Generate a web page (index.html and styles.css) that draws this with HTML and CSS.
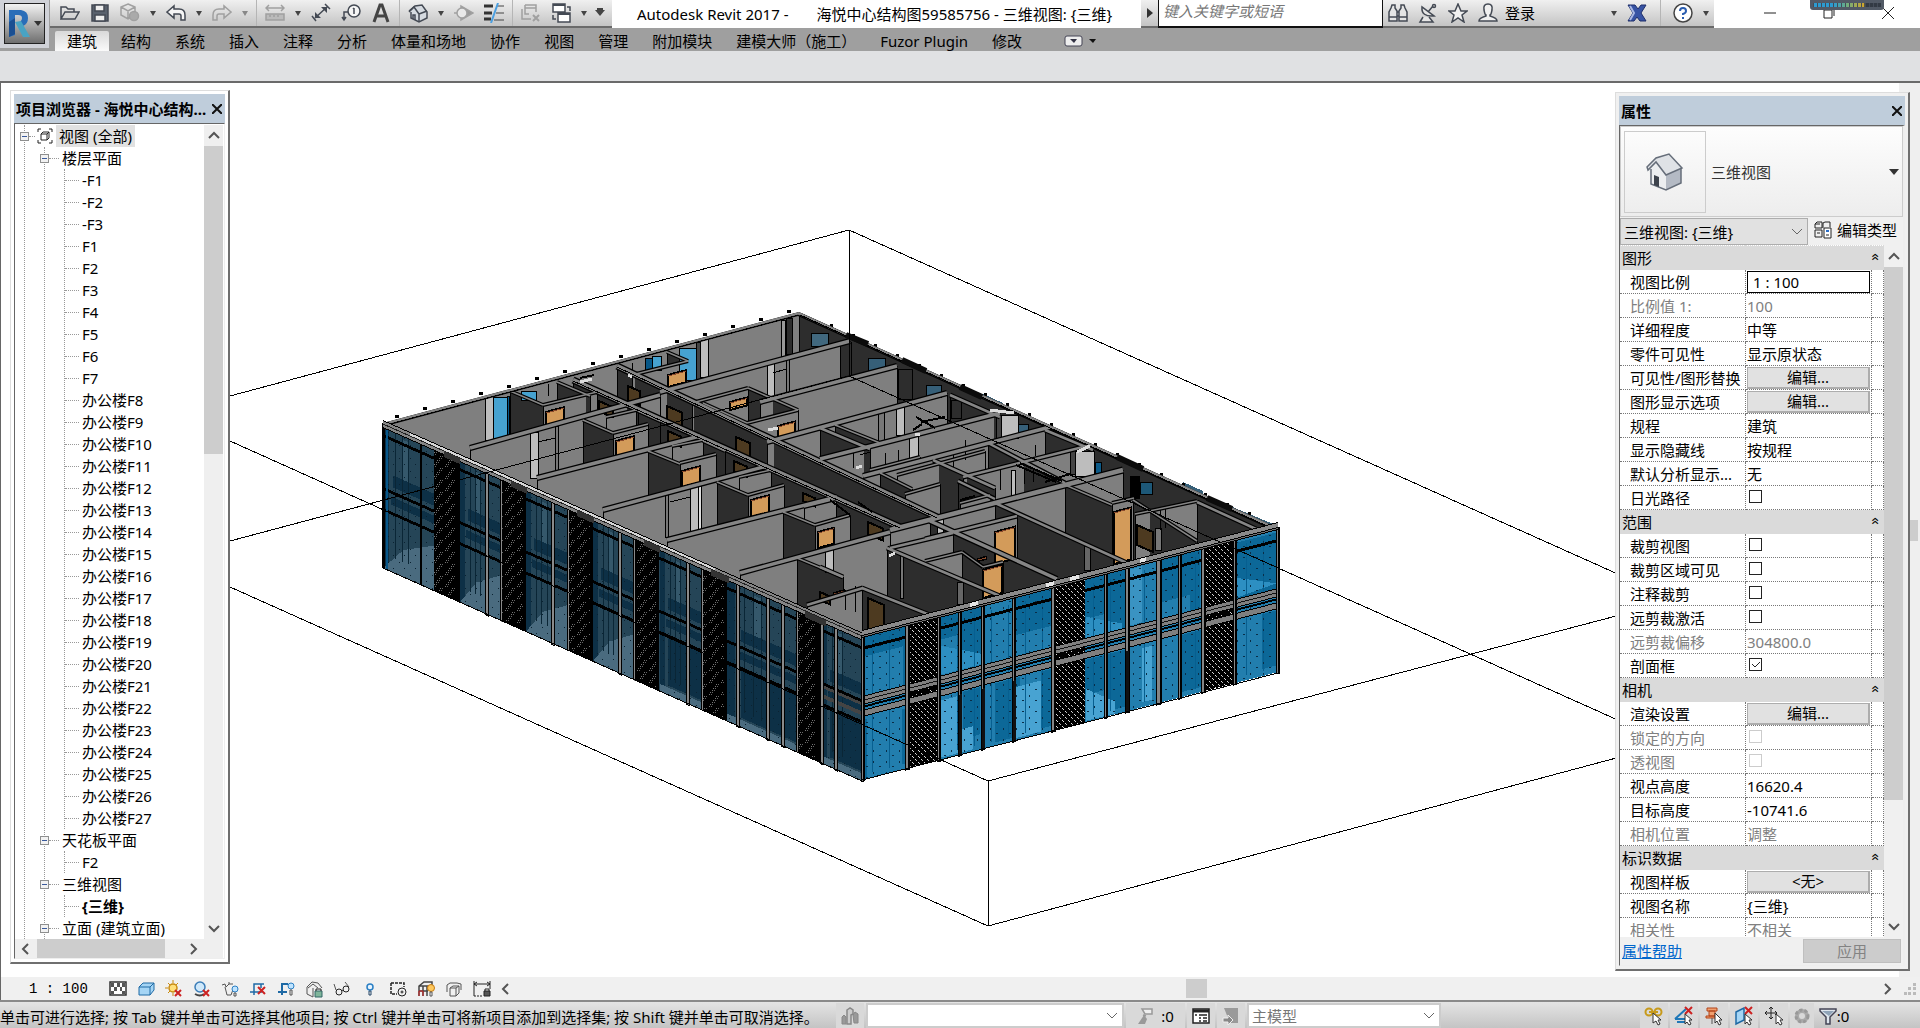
FILE: index.html
```html
<!DOCTYPE html>
<html lang="zh-CN">
<head>
<meta charset="utf-8">
<title>Autodesk Revit 2017 - 海悦中心结构图59585756</title>
<link rel="stylesheet" href="styles.css">
</head>
<body>
<header class="top">
  <button class="app" aria-label="应用程序菜单">
    <svg width="24" height="30" viewBox="0 0 24 30"><path d="M2 1h12q7 1 7 8 0 6-5 8l-6-3q5-1 5-5 0-3-4-3H8v20l-6 2z" fill="#2a6db8"/><path d="M8 9l-6 4v15l6-3z" fill="#1b4f92"/><path d="M8 13l6-1 9 16h-7z" fill="#49a3c4"/></svg>
    <svg width="8" height="5" viewBox="0 0 8 5"><path d="M0 0h8L4 5z" fill="#333"/></svg>
  </button>
  <div class="bars">
    <div class="titlebar">
      <div class="qat">
        <button class="tb" aria-label="打开"><svg width="20" height="20" viewBox="0 0 20 20" class="ic"><path d="M1 16V4h5l2 2h6v3M1 16l4-7h14l-4 7z"/></svg></button>
        <button class="tb" aria-label="保存"><svg width="20" height="20" viewBox="0 0 20 20" class="ic"><path d="M2 2h16v16H2z" fill="#59616d"/><path d="M5 2h9v6H5z" fill="#eee"/><path d="M5 12h10v6H5z" fill="#eee"/></svg></button>
        <button class="tb" aria-label="同步"><svg width="20" height="20" viewBox="0 0 20 20" class="ic dim"><path d="M8 1l7 3v8l-7 4-7-4V4zM1 4l7 4 7-4M8 8v8"/><circle cx="14" cy="13" r="4.500" fill="#aaa"/></svg></button>
        <button class="drop" aria-label="同步选项"></button>
        <button class="tb" aria-label="放弃"><svg width="20" height="20" viewBox="0 0 20 20" class="ic"><path d="M1 9l7-6v3h5q6 0 6 6v5h-4v-4q0-2-2-2H8v4z" fill="#f5f5f5"/></svg></button>
        <button class="drop" aria-label="放弃选项"></button>
        <button class="tb" aria-label="重做"><svg width="20" height="20" viewBox="0 0 20 20" class="ic dim"><path d="M19 9l-7-6v3H7q-6 0-6 6v5h4v-4q0-2 2-2h5v4z"/></svg></button>
        <button class="drop dimmed" aria-label="重做选项"></button>
        <span class="sep"></span>
        <button class="tb" aria-label="测量"><svg width="20" height="20" viewBox="0 0 20 20" class="ic dim"><path d="M1 5h18M4 2L1 5l3 3M16 2l3 3-3 3"/><path d="M1 11h18v6H1z" fill="#bbb"/><path d="M5 12v2M9 12v2M13 12v2"/></svg></button>
        <button class="drop" aria-label="测量选项"></button>
        <button class="tb" aria-label="对齐尺寸标注"><svg width="20" height="20" viewBox="0 0 20 20" class="ic"><path d="M4 15L16 4M1 13l4 5M14 1l5 5"/><path d="M4 15v-6l6 6zM16 4v6l-6-6z" fill="#444a54" stroke="none"/></svg></button>
        <button class="tb" aria-label="按类别标记"><svg width="20" height="20" viewBox="0 0 20 20" class="ic"><circle cx="13" cy="8" r="6" fill="#f5f5f5"/><path d="M13 5v6M12 6l1-1M7 9H3v7M1 14l2 3 2-3"/></svg></button>
        <button class="tb" aria-label="文字"><svg width="20" height="20" viewBox="0 0 20 20"><path d="M3 19L9 2h2l6 17M6 13h8" stroke="#444" stroke-width="3" fill="none"/></svg></button>
        <span class="sep"></span>
        <button class="tb" aria-label="默认三维视图"><svg width="20" height="20" viewBox="0 0 20 20" class="ic"><path d="M1 8l6-5 7-1 5 7v6l-8 4-8-4V9" fill="#d5dae0"/><path d="M1 9l5-5 5 7v8M11 11l8-3M5 16v-4h2v5"/></svg></button>
        <button class="drop" aria-label="三维视图选项"></button>
        <button class="tb" aria-label="剖面"><svg width="20" height="20" viewBox="0 0 20 20" class="ic dim"><path d="M7 3v14l12-7z" fill="#999"/><circle cx="8" cy="10" r="5" fill="#e8e8e8"/><path d="M0 10h3"/></svg></button>
        <button class="tb" aria-label="细线"><svg width="20" height="20" viewBox="0 0 20 20"><path d="M0 3h9M0 10h8M0 16h7" stroke="#333" stroke-width="3"/><path d="M13 3h7M12 10h8M10 17h10" stroke="#444"/><path d="M14 0L7 20" stroke="#4b9fe0" stroke-width="2"/></svg></button>
        <span class="sep"></span>
        <button class="tb" aria-label="关闭隐藏窗口"><svg width="20" height="20" viewBox="0 0 20 20" class="ic dim"><path d="M4 2h11v7M4 2v9h4M1 6v10h9M4 5h11"/><path d="M12 12l6 6M18 12l-6 6" stroke-width="2"/></svg></button>
        <button class="tb" aria-label="切换窗口"><svg width="20" height="20" viewBox="0 0 20 20" class="ic"><path d="M2 1h12v8H2zM7 10h12v9H7z" fill="#fff"/><path d="M2 2h12M7 11h12" stroke-width="2"/><path d="M2 12v4h3M16 4h3v4"/></svg></button>
        <button class="drop" aria-label="窗口选项"></button>
        <button class="drop more" aria-label="自定义快速访问工具栏"></button>
      </div>
      <h1 class="title"><span>Autodesk Revit 2017 -</span><span>海悦中心结构图59585756 - 三维视图: {三维}</span></h1>
      <button class="expand" aria-label="展开搜索"><svg width="6" height="10" viewBox="0 0 6 10"><path d="M0 0l6 5-6 5z" fill="#333"/></svg></button>
      <input class="search" type="text" placeholder="键入关键字或短语" aria-label="搜索">
      <div class="info">
        <button class="tb" aria-label="搜索"><svg width="20" height="20" viewBox="0 0 20 20" class="ic"><path d="M4 2h3v3l2 3v10H1V9l2-4zM13 2h3l1 3 2 4v9h-8V8l2-3zM9 9h2v4H9zM1 14h8M11 14h8" fill="#e5e5e5"/></svg></button>
        <button class="tb" aria-label="通讯中心"><svg width="20" height="20" viewBox="0 0 20 20" class="ic"><path d="M4 4q-1 10 12 9zM5 14l-3 5h13l-4-5M10 9l5-6" fill="#e5e5e5"/><circle cx="16" cy="3" r="1.500"/></svg></button>
        <button class="tb" aria-label="收藏夹"><svg width="20" height="20" viewBox="0 0 20 20" class="ic"><path d="M10 1l3 7h6l-5 4 2 7-6-4-6 4 2-7-5-4h6z" fill="#f0f0f0"/></svg></button>
        <button class="login"><svg width="20" height="20" viewBox="0 0 20 20" class="ic"><path d="M10 1q5 0 4 6-1 5-2 5v1q7 2 7 5H1q0-3 7-5v-1q-1 0-2-5-1-6 4-6z" fill="#f0f0f0"/></svg>登录</button>
        <button class="drop login-drop" aria-label="登录选项"></button>
        <button class="tb" aria-label="Exchange 应用"><svg width="20" height="20" viewBox="0 0 20 20"><path d="M1 2h7l3 4 3-4h5l-5 8 5 8h-6l-3-4-3 4H1l5-8z" fill="#3753a4" stroke="#1f2f6b"/><path d="M3 3l4 7-4 7" stroke="#a9b8e4" stroke-width="2" fill="none"/></svg></button>
        <span class="sep"></span>
        <button class="tb" aria-label="帮助"><svg width="20" height="20" viewBox="0 0 20 20"><circle cx="10" cy="10" r="9" fill="#fff" stroke="#444" stroke-width="1.500"/><path d="M7 8q0-3 3-3t3 3q0 2-3 3v1M10 14v2" stroke="#2a5db0" stroke-width="2" fill="none"/></svg></button>
        <button class="drop" aria-label="帮助选项"></button>
      </div>
      <div class="win">
        <button aria-label="最小化"><svg width="12" height="12" viewBox="0 0 12 12" class="ln"><path d="M0 6h12"/></svg></button>
        <button aria-label="还原"><svg width="12" height="12" viewBox="0 0 12 12" class="ln"><path d="M1 3h8v8H1zM3 1h8v8"/></svg></button>
        <button aria-label="关闭"><svg width="12" height="12" viewBox="0 0 12 12" class="ln"><path d="M0 0l12 12M12 0L0 12"/></svg></button>
        <span class="meter"></span>
      </div>
    </div>
    <nav class="tabs">
      <button class="on">建筑</button><button>结构</button><button>系统</button><button>插入</button><button>注释</button><button>分析</button><button>体量和场地</button><button>协作</button><button>视图</button><button>管理</button><button>附加模块</button><button>建模大师（施工）</button><button>Fuzor Plugin</button><button>修改</button>
      <button class="mini" aria-label="最小化功能区"><svg width="32" height="12" viewBox="0 0 32 12"><rect x="1" y="1" width="17" height="10" rx="2" fill="#eee" stroke="#445"/><path d="M6 4h7l-3 4z" fill="#334"/><path d="M25 4h7l-3 4z" fill="#111"/></svg></button>
    </nav>
  </div>
</header>
<div class="ribbon"></div>

<main class="work">
  <svg class="model" id="model" viewBox="0 83 1920 894" preserveAspectRatio="xMidYMin meet" role="img" aria-label="三维视图模型"></svg>

  <section class="palette browser">
    <div class="cap"><h2>项目浏览器 - 海悦中心结构...</h2><button aria-label="关闭"><svg width="10" height="10" viewBox="0 0 10 10" class="x"><path d="M0 0l10 10M10 0L0 10"/></svg></button></div>
    <div class="frame">
      <div class="scroller">
        <ul class="tree">
          <li><div class="row"><i class="tog"></i><i class="dash"></i><svg width="16" height="16" viewBox="0 0 16 16" class="ln"><path d="M1 4V1h3M12 1h3v3M15 12v3h-3M4 15H1v-3M4 6l2-2h6v6l-2 2H4zM4 6h6v6M10 6l2-2"/></svg><span class="sel">视图 (全部)</span></div>
            <ul class="l1">
              <li><div class="row"><i class="tog"></i><i class="dash"></i>楼层平面</div>
                <ul class="l2"><li>-F1</li><li>-F2</li><li>-F3</li><li>F1</li><li>F2</li><li>F3</li><li>F4</li><li>F5</li><li>F6</li><li>F7</li><li>办公楼F8</li><li>办公楼F9</li><li>办公楼F10</li><li>办公楼F11</li><li>办公楼F12</li><li>办公楼F13</li><li>办公楼F14</li><li>办公楼F15</li><li>办公楼F16</li><li>办公楼F17</li><li>办公楼F18</li><li>办公楼F19</li><li>办公楼F20</li><li>办公楼F21</li><li>办公楼F22</li><li>办公楼F23</li><li>办公楼F24</li><li>办公楼F25</li><li>办公楼F26</li><li>办公楼F27</li></ul></li>
              <li><div class="row"><i class="tog"></i><i class="dash"></i>天花板平面</div><ul class="l2"><li>F2</li></ul></li>
              <li><div class="row"><i class="tog"></i><i class="dash"></i>三维视图</div><ul class="l2"><li><b>{三维}</b></li></ul></li>
              <li><div class="row"><i class="tog"></i><i class="dash"></i>立面 (建筑立面)</div></li>
            </ul></li>
        </ul>
        <div class="vs"><svg width="12" height="8" viewBox="0 0 12 8" class="ch"><path d="M1 7l5-5 5 5"/></svg><div class="thumb tree-thumb"></div><svg width="12" height="8" viewBox="0 0 12 8" class="ch end"><path d="M1 1l5 5 5-5"/></svg></div>
      </div>
      <div class="hs"><svg width="8" height="12" viewBox="0 0 8 12" class="ch"><path d="M7 1L2 6l5 5"/></svg><div class="thumb"></div><svg width="8" height="12" viewBox="0 0 8 12" class="ch"><path d="M1 1l5 5-5 5"/></svg></div>
    </div>
  </section>

  <section class="palette props">
    <div class="cap"><h2>属性</h2><button aria-label="关闭"><svg width="10" height="10" viewBox="0 0 10 10" class="x"><path d="M0 0l10 10M10 0L0 10"/></svg></button></div>
    <div class="frame">
      <button class="type">
        <span class="pic"><svg width="40" height="40" viewBox="0 0 40 40"><path d="M4 16L8 33l13 5 15-7V16L23 3z" fill="#c9cdd3"/><path d="M4 16l7-6 10 11v17L6 32z" fill="#eceef0"/><path d="M21 21l15-7v17l-15 7z" fill="#b4bac4"/><path d="M2 15l9-9 13-4 13 14-16 7L11 10l-8 8z" fill="#dfe2e6" stroke="#666e7a" stroke-width="1.500"/><path d="M6 17v15l15 6 15-7V16" fill="none" stroke="#666e7a" stroke-width="1.500"/><path d="M9 33V23l5 2v10z" fill="#3d434c"/></svg></span>
        <span class="tn">三维视图</span>
        <svg width="10" height="6" viewBox="0 0 10 6"><path d="M0 0h10L5 6z" fill="#333"/></svg>
      </button>
      <div class="inst">
        <select aria-label="实例"><option>三维视图: {三维}</option></select>
        <button class="edit"><svg width="18" height="18" viewBox="0 0 18 18" class="ln"><path d="M1 3l2-2h5v6H1zM1 9h7v7H1zM9 2l2-1h5v5M9 2v5M1 3h5M3 12h3"/><path d="M10 7h7v10h-7z" fill="#fff"/><path d="M12 10h3" stroke="#2a6fc9" stroke-width="2"/><path d="M12 14h3"/></svg>编辑类型</button>
      </div>
      <div class="gridbox">
        <div class="clip">
        <table>
          <colgroup><col><col class="c2"><col class="c3"></colgroup>
          <tr class="g"><th colspan="3"><span>图形</span></th></tr>
          <tr><td><label for="sc">视图比例</label></td><td><input id="sc" class="val" type="text" value="1 : 100"></td><td></td></tr>
          <tr class="off"><td>比例值 1:</td><td>100</td><td></td></tr>
          <tr><td>详细程度</td><td>中等</td><td></td></tr>
          <tr><td>零件可见性</td><td>显示原状态</td><td></td></tr>
          <tr><td>可见性/图形替换</td><td><button>编辑...</button></td><td></td></tr>
          <tr><td>图形显示选项</td><td><button>编辑...</button></td><td></td></tr>
          <tr><td>规程</td><td>建筑</td><td></td></tr>
          <tr><td>显示隐藏线</td><td>按规程</td><td></td></tr>
          <tr><td>默认分析显示...</td><td>无</td><td></td></tr>
          <tr><td><label for="k1">日光路径</label></td><td><input id="k1" type="checkbox"></td><td></td></tr>
          <tr class="g"><th colspan="3"><span>范围</span></th></tr>
          <tr><td><label for="k2">裁剪视图</label></td><td><input id="k2" type="checkbox"></td><td></td></tr>
          <tr><td><label for="k3">裁剪区域可见</label></td><td><input id="k3" type="checkbox"></td><td></td></tr>
          <tr><td><label for="k4">注释裁剪</label></td><td><input id="k4" type="checkbox"></td><td></td></tr>
          <tr><td><label for="k5">远剪裁激活</label></td><td><input id="k5" type="checkbox"></td><td></td></tr>
          <tr class="off"><td>远剪裁偏移</td><td>304800.0</td><td></td></tr>
          <tr><td><label for="k6">剖面框</label></td><td><input id="k6" type="checkbox" checked></td><td></td></tr>
          <tr class="g"><th colspan="3"><span>相机</span></th></tr>
          <tr><td>渲染设置</td><td><button>编辑...</button></td><td></td></tr>
          <tr class="off"><td><label for="k7">锁定的方向</label></td><td><input id="k7" type="checkbox" disabled></td><td></td></tr>
          <tr class="off"><td><label for="k8">透视图</label></td><td><input id="k8" type="checkbox" disabled></td><td></td></tr>
          <tr><td>视点高度</td><td>16620.4</td><td></td></tr>
          <tr><td>目标高度</td><td>-10741.6</td><td></td></tr>
          <tr class="off"><td>相机位置</td><td>调整</td><td></td></tr>
          <tr class="g"><th colspan="3"><span>标识数据</span></th></tr>
          <tr><td>视图样板</td><td><button>&lt;无&gt;</button></td><td></td></tr>
          <tr><td>视图名称</td><td>{三维}</td><td></td></tr>
          <tr class="off"><td>相关性</td><td>不相关</td><td></td></tr>
        </table>
        </div>
        <div class="vs"><svg width="12" height="8" viewBox="0 0 12 8" class="ch"><path d="M1 7l5-5 5 5"/></svg><div class="thumb prop-thumb"></div><svg width="12" height="8" viewBox="0 0 12 8" class="ch end"><path d="M1 1l5 5 5-5"/></svg></div>
      </div>
      <div class="foot"><a href="#help">属性帮助</a><button disabled>应用</button></div>
    </div>
  </section>
  <div class="docscroll"><div class="thumb"></div></div>
</main>

<div class="viewbar">
  <button class="scale">1 : 100</button>
  <div class="vicons">
    <button aria-label="详细程度"><svg width="18" height="18" viewBox="0 0 18 18"><path d="M1 2h16v13H1z" fill="#fff" stroke="#333" stroke-width="1.500"/><path d="M2 3h3v4H2zM8 3h3v4H8zM13 3h3v4h-3zM5 7h3v4H5zM11 7h2v4h-2zM2 11h3v3H2zM13 11h3v3h-3z" fill="#555"/></svg></button>
    <button aria-label="视觉样式"><svg width="18" height="18" viewBox="0 0 18 18"><path d="M2 7l4-4h11v7l-4 5H2z" fill="#a5d5f5" stroke="#1f6aa5"/><path d="M2 7h11v8M13 7l4-4" fill="none" stroke="#1f6aa5"/></svg></button>
    <button aria-label="日光路径"><svg width="18" height="18" viewBox="0 0 18 18"><circle cx="8" cy="8" r="4" fill="#ffe07a" stroke="#c88a10" stroke-width="1.500"/><path d="M8 0v3M8 13v3M0 8h3M3 3l2 2M13 3l-2 2M3 13l2-2" stroke="#c88a10"/><path d="M10 10l6 6M16 10l-6 6" stroke="#c22" stroke-width="2"/></svg></button>
    <button aria-label="阴影"><svg width="18" height="18" viewBox="0 0 18 18"><circle cx="7" cy="7" r="5" fill="#cfe8fa" stroke="#3b7db8" stroke-width="1.500"/><path d="M2 14q5 3 9 0" stroke="#444" fill="none" stroke-width="2"/><path d="M10 10l6 6M16 10l-6 6" stroke="#c22" stroke-width="2"/></svg></button>
    <button aria-label="渲染对话框"><svg width="18" height="18" viewBox="0 0 18 18" class="ln"><path d="M1 5l3-1 1 3 3-3h4M4 7l2 8h4l3-8M8 4V2" stroke="#555"/><circle cx="14" cy="9" r="3" fill="#bfe4ff" stroke="#2a7fc4"/><path d="M13 13h2v3h-2z" stroke="#555"/></svg></button>
    <button aria-label="裁剪视图"><svg width="18" height="18" viewBox="0 0 18 18"><path d="M5 15V4h10M1 12h12M12 4v4" stroke="#1f6aa5" fill="none" stroke-width="1.500"/><path d="M9 7l7 7M16 7l-7 7" stroke="#c22" stroke-width="2"/></svg></button>
    <button aria-label="显示裁剪区域"><svg width="18" height="18" viewBox="0 0 18 18"><path d="M5 15V4h6M1 12h9" stroke="#1f6aa5" fill="none" stroke-width="2"/><circle cx="14" cy="6" r="3" fill="#bfe4ff" stroke="#2a7fc4"/><path d="M13 10h2v5h-2z" fill="none" stroke="#555"/></svg></button>
    <button aria-label="锁定三维视图"><svg width="18" height="18" viewBox="0 0 18 18" class="ln"><path d="M2 7l5-5 6 1 4 5M2 7v7l6 3M8 8v9M3 8l5-4 5 4" stroke="#555"/><path d="M10 11h7v6h-7z" fill="#7fb59a" stroke="#366"/><path d="M11 11V9h5v2"/></svg></button>
    <button aria-label="临时隐藏"><svg width="18" height="18" viewBox="0 0 18 18" class="ln"><circle cx="6" cy="12" r="3"/><circle cx="13" cy="9" r="3"/><path d="M9 11l1-1M3 10L1 4M16 7l-4-5" stroke="#555"/></svg></button>
    <button aria-label="显示隐藏的图元"><svg width="18" height="18" viewBox="0 0 18 18"><circle cx="9" cy="7" r="3" fill="#e6f4ff" stroke="#2a7fc4" stroke-width="1.500"/><path d="M8 11h2v4H8z" fill="none" stroke="#246"/></svg></button>
    <button aria-label="临时视图属性"><svg width="18" height="18" viewBox="0 0 18 18" class="ln"><path d="M2 3h13v4M2 3v11h6" stroke-width="1.500" stroke-dasharray="3 1"/><circle cx="13" cy="12" r="4"/><circle cx="13" cy="12" r="1"/></svg></button>
    <button aria-label="分析模型"><svg width="18" height="18" viewBox="0 0 18 18"><path d="M2 16V6l5-4h8v4M6 16V6M10 16V6M2 6h10M2 11h9" stroke="#444" stroke-width="1.500" fill="none"/><path d="M2 16v-5h4v5" stroke="#c22" fill="none"/><circle cx="14" cy="8" r="3.500" fill="#ffc95e" stroke="#c57a10"/><path d="M13 12h2v4h-2z" fill="#fff" stroke="#555"/></svg></button>
    <button aria-label="位移集"><svg width="18" height="18" viewBox="0 0 18 18" class="ln"><path d="M5 8l3-2h6v7l-3 3H5zM5 8h6v8M11 8l3-2M2 12V5l3-2h7l4 1v6" stroke="#555"/></svg></button>
    <button aria-label="显示约束"><svg width="18" height="18" viewBox="0 0 18 18" class="ln"><path d="M1 1v15M17 1v8M1 4h16M4 2L1 4l3 2M14 2l3 2-3 2"/><path d="M1 16h8" stroke-dasharray="2 1"/><path d="M11 11h6v5h-6z" fill="#555"/><path d="M12 11V9h4v2"/></svg></button>
    <button aria-label="折叠"><svg width="8" height="12" viewBox="0 0 8 12" class="ch"><path d="M7 1L2 6l5 5"/></svg></button>
  </div>
  <div class="hscroll"><div class="thumb"></div><svg width="8" height="12" viewBox="0 0 8 12" class="ch"><path d="M1 1l5 5-5 5"/></svg></div>
  <svg width="12" height="12" viewBox="0 0 12 12" class="grip"><path d="M9 0h3v3H9zM4 4h3v3H4zM9 4h3v3H9zM0 9h3v3H0zM4 9h3v3H4zM9 9h3v3H9z" fill="#bbb"/></svg>
</div>

<footer class="status">
  <p class="hint">单击可进行选择; 按 Tab 键并单击可选择其他项目; 按 Ctrl 键并单击可将新项目添加到选择集; 按 Shift 键并单击可取消选择。</p>
  <div class="sets">
    <button aria-label="工作集"><svg width="18" height="18" viewBox="0 0 18 18"><path d="M1 10l2-2 2 2v7H1zM12 8l2-3 3 2v9h-4z" fill="#999" stroke="#888"/><path d="M6 3l3-2 3 2v4l-2 1v9H6V8z" fill="#ccc" stroke="#888" stroke-width="1.500"/></svg></button>
    <select class="ws" aria-label="活动工作集"><option></option></select>
    <button class="count"><svg width="18" height="18" viewBox="0 0 18 18"><path d="M5 2h10v5H8zM6 8l3 1" fill="#eee" stroke="#999" stroke-width="1.500"/><path d="M7 8l-6 9h7l2-5z" fill="#999"/></svg>:0</button>
    <button aria-label="设计选项"><svg width="18" height="18" viewBox="0 0 18 18" class="ln"><path d="M1 2h16v14H1z" fill="#fff" stroke-width="1.500"/><path d="M1 4h16" stroke-width="3"/><path d="M3 8h2M7 8h8M7 11h2M11 11h4M7 14h2M11 14h4" stroke-width="1.500"/></svg></button>
    <button aria-label="编辑选项"><svg width="18" height="18" viewBox="0 0 18 18"><path d="M2 1h14v15H8" fill="#9a9a9a"/><path d="M1 11h5V8l5 5-5 5v-3H1z" fill="#888" stroke="#eee"/></svg></button>
    <select class="opt" aria-label="设计选项"><option>主模型</option></select>
  </div>
  <div class="picks">
    <button aria-label="选择链接"><svg width="20" height="20" viewBox="0 0 20 20"><circle cx="5" cy="6" r="3.500" fill="none" stroke="#c79a1b" stroke-width="2"/><circle cx="14" cy="6" r="3.500" fill="none" stroke="#c79a1b" stroke-width="2"/><path d="M5 6h9" stroke="#c79a1b" stroke-width="2"/><path d="M9 7v10l3-2 2 4 2-1-2-4h3z" fill="#fff" stroke="#333"/></svg></button>
    <button aria-label="选择基线图元"><svg width="20" height="20" viewBox="0 0 20 20"><path d="M1 13L12 3M1 13h12M3 16h9" stroke="#1f78b8" stroke-width="2" fill="none"/><path d="M11 1l7 7M18 1l-7 7" stroke="#c22" stroke-width="2"/><path d="M11 8v10l2-2 2 3 2-1-2-4h3z" fill="#fff" stroke="#333"/></svg></button>
    <button aria-label="选择锁定图元"><svg width="20" height="20" viewBox="0 0 20 20"><path d="M3 2h10v3H3zM5 5h6v5H5zM2 10h12v2H2z" fill="#f0a070" stroke="#b3451b"/><path d="M8 12v6" stroke="#555"/><path d="M11 7v10l2-2 2 4 2-1-2-4h3z" fill="#fff" stroke="#333"/></svg></button>
    <button aria-label="按面选择图元"><svg width="20" height="20" viewBox="0 0 20 20"><path d="M2 6l8-4v12l-8 4z" fill="#a5d5f5" stroke="#1f6aa5" stroke-width="1.500"/><path d="M11 1l7 7M18 1l-7 7" stroke="#c22" stroke-width="2"/><path d="M11 8v10l2-2 2 3 2-1-2-4h3z" fill="#fff" stroke="#333"/></svg></button>
    <button aria-label="选择时拖曳图元"><svg width="20" height="20" viewBox="0 0 20 20"><path d="M7 1v12M1 7h12M5 3l2-2 2 2M5 11l2 2 2-2M3 5L1 7l2 2M11 5l2 2-2 2" stroke="#222" fill="none"/><path d="M12 8v10l2-2 2 3 2-1-2-4h3z" fill="#fff" stroke="#333"/></svg></button>
    <button class="proc" aria-label="后台进程"><svg width="20" height="20" viewBox="0 0 20 20"><circle cx="10" cy="10" r="5" fill="none" stroke="#aaa" stroke-width="4"/><circle cx="10" cy="10" r="6" fill="none" stroke="#999" stroke-width="3" stroke-dasharray="3 2"/></svg></button>
    <button class="filter"><svg width="18" height="18" viewBox="0 0 18 18"><path d="M1 2h16v2l-6 6v7H7v-7L1 4z" fill="#dfe6ee" stroke="#445" stroke-width="1.500"/><path d="M3 4h12l-5 5z" fill="#8fa3b8"/></svg>:0</button>
  </div>
</footer>
<script src="building.js"></script>
</body>
</html>
```
FILE: styles.css
```css
* { box-sizing: border-box; }
body { margin: 0; min-height: 100vh; display: flex; flex-direction: column; background: #fff; color: #000; font: 15px/22px "Noto Sans", "Noto Sans CJK SC", sans-serif; }
button, input, select { font: inherit; color: inherit; margin: 0; padding: 0; border: 0; border-radius: 0; background: none; }
button { display: flex; align-items: center; justify-content: center; }
h1, h2, p, ul { margin: 0; padding: 0; font-size: 15px; font-weight: 400; }
ul { list-style: none; }
svg { flex: none; }
.ic { fill: none; stroke: #444a54; stroke-width: 1.5; }
.ic.dim { stroke: #a0a0a0; }
.ln { fill: none; stroke: #222; }
.x { stroke: #111; stroke-width: 2; }
.ch { fill: none; stroke: #555; stroke-width: 2; }

.top { display: flex; background: #9f9f9f; height: 51px; }
.app { width: 41px; margin: 3px 5px 7px 4px; gap: 3px; background: linear-gradient(#f2f2f2, #6f6f6f); border: 1px solid #222; outline: 4px solid #d0d2d8; }
.bars { flex: 1; min-width: 0; display: flex; flex-direction: column; }
.titlebar { display: flex; height: 28px; background: #fff; }
.qat, .info, .expand { display: flex; align-items: center; background: linear-gradient(#f0f0f0, #c4c4c4); border-bottom: 2px solid #6a6a6a; }
.qat { width: 562px; padding-left: 5px; }
.tb { width: 30px; height: 24px; }
.sep { width: 1px; height: 26px; margin: 0 3px; background: #b5b5b5; }
.drop { width: 16px; height: 24px; }
.drop::after { content: ""; border: 3px solid transparent; border-top: 5px solid #444; border-bottom: 0; }
.drop.dimmed::after { border-top-color: #888; }
.drop.more::after { border-width: 6px 5px 0; box-shadow: 0 -4px 0 -2px #444; }
.title { width: 529px; padding-left: 25px; display: flex; gap: 28px; align-items: center; white-space: nowrap; }
.expand { width: 17px; }
.search { width: 225px; border: 1px solid #111; border-width: 0 1px 2px; padding: 0 4px 5px; background: #fff; }
.search::placeholder { color: #777; font-style: italic; opacity: 1; }
.info { width: 331px; }
.info .sep { margin: 0 7px 0 8px; }
.login { gap: 7px; height: 24px; padding-left: 5px; }
.login-drop { margin-left: auto; }
.win { flex: 1; position: relative; display: flex; align-items: center; justify-content: space-between; padding: 0 26px 2px 50px; }
.meter { position: absolute; top: 0; right: 36px; width: 74px; height: 10px; border-radius: 0 0 3px 3px; border: 3px solid #525a66; background: repeating-linear-gradient(90deg, #444c58 0 1px, transparent 1px 4px), linear-gradient(90deg, #2c9bd0 30%, #6fae7f 50%, #cfa52d 75%, #333a44 76%); }
.tabs { display: flex; flex: 1; padding: 3px 0 0 5px; align-items: stretch; }
.tabs button { padding: 0 12px; height: 20px; line-height: 20px; white-space: nowrap; }
.tabs .on { background: linear-gradient(#d9d9d9, #fafafa); border-radius: 2px 2px 0 0; }
.tabs .mini { padding: 0 0 0 30px; }
.ribbon { height: 32px; background: #e0e1e3; border-bottom: 2px solid #6a6a6a; }

.work { flex: 1; position: relative; display: flex; justify-content: space-between; border-left: 1px solid #666; }
.model { position: absolute; top: 0; left: -1px; width: calc(100% + 1px); height: 100%; shape-rendering: crispEdges; }
.palette { position: relative; z-index: 1; display: flex; flex-direction: column; padding: 3px; background: #fff; border: 1px solid #ddd; border-right: 2px solid #6f6f6f; border-bottom: 2px solid #6f6f6f; }
.browser { width: 220px; margin: 7px 0 13px 9px; }
.props { width: 295px; margin: 9px 10px 6px 0; background: #f0f0f0; }
.cap { display: flex; align-items: center; justify-content: space-between; height: 29px; padding: 0 3px 0 2px; background: #bfcddb; }
.cap h2 { font-weight: 700; white-space: nowrap; }
.frame { flex: 1; min-height: 0; display: flex; flex-direction: column; border: 1px solid #eee; border-top: 1px solid #666; border-left: 1px solid #666; }
.props .frame { border-right-width: 2px; }
.browser .frame { padding: 1px 1px 0 0; }
.scroller { flex: 1; display: flex; }
.tree { flex: 1; min-width: 0; margin-left: 9px; white-space: nowrap; }
.row, .l2 li { display: flex; align-items: center; height: 22px; }
.tree > li { border-left: 1px dotted #999; }
.tog { flex: none; width: 9px; height: 9px; margin-left: -5px; border: 1px solid #8e8f8f; background: linear-gradient(#3a5a9c, #3a5a9c) center / 5px 1px no-repeat #f2f2f2; }
.dash { width: 10px; margin-right: 3px; border-top: 1px dotted #999; }
.tree > li > .row > .dash { width: 6px; margin: 0 2px 0 0; }
.sel { background: #e1e1e1; margin-left: 3px; padding: 0 3px; line-height: 22px; }
.l1, .l2 { margin-left: 19px; border-left: 1px dotted #999; }
.l2 li::before { content: ""; width: 14px; margin-right: 3px; border-top: 1px dotted #999; }
.vs { width: 19px; background: #efefef; display: flex; flex-direction: column; align-items: center; padding: 6px 0; }
.thumb { background: #cdcdcd; }
.vs .thumb { width: 19px; margin-top: 7px; }
.tree-thumb { flex: 0 0 308px; }
.prop-thumb { flex: 0 0 533px; }
.vs .end { margin-top: auto; }
.hs { height: 19px; display: flex; align-items: center; background: #efefef; padding: 0 25px 0 6px; justify-content: space-between; }
.hs .thumb { width: 128px; height: 19px; margin-right: 18px; }

.type { height: 91px; border: 1px solid #ccc; background: linear-gradient(#fdfdfd, #ededed); padding: 0 3px; text-align: left; color: #333; }
.pic { width: 82px; height: 82px; border: 1px solid #ccc; display: flex; align-items: center; justify-content: center; }
.tn { flex: 1; padding-left: 5px; }
.inst { display: flex; padding: 1px 0 0; height: 28px; }
.inst select, .ws, .opt { appearance: none; background: url("data:image/svg+xml,%3Csvg xmlns='http://www.w3.org/2000/svg' width='10' height='6'%3E%3Cpath d='M0 0l5 5 5-5' fill='none' stroke='%23666'/%3E%3C/svg%3E") right 5px center no-repeat #e1e1e1; border: 1px solid #adadad; opacity: 1; }
.inst select { width: 188px; padding-left: 3px; }
.edit { gap: 5px; padding-left: 6px; white-space: nowrap; height: 24px; }
.gridbox { flex: 1 1 0; min-height: 0; display: flex; background: #fff; }
.clip { flex: 1; min-height: 0; overflow: hidden; }
table { width: 100%; table-layout: fixed; border-collapse: collapse; }
.c2 { width: 126px; }
.c3 { width: 12px; }
td, th { height: 24px; padding: 0; border: 1px dotted #777; border-left: 0; text-align: left; font-weight: 400; white-space: nowrap; line-height: 22px; }
td:first-child { padding-left: 10px; }
td:nth-child(2) { padding-left: 1px; }
.g th { background: #dadada; padding-left: 2px; border-color: #dadada; }
.g span { display: flex; justify-content: space-between; }
.g span::after { content: "»"; width: 20px; height: 20px; line-height: 20px; text-align: center; transform: rotate(-90deg); }
.off { color: #808080; }
td button { width: 123px; height: 22px; background: #e1e1e1; border: 1px solid #adadad; border-bottom-width: 2px; border-right-width: 2px; line-height: 18px; }
.val { display: block; width: 123px; height: 22px; border: 1px solid #000; padding: 0 5px; background: #fff; }
td input[type=checkbox] { display: block; appearance: none; width: 13px; height: 13px; border: 1px solid #222; margin: 0 2px 2px; background: #fff; }
td input:disabled { border-color: #ccc; }
td input:checked { background: url("data:image/svg+xml,%3Csvg xmlns='http://www.w3.org/2000/svg' width='11' height='11'%3E%3Cpath d='M2 5l3 3 5-5' fill='none' stroke='%23222'/%3E%3C/svg%3E") #fff; }
.props .vs { background: #f0f0f0; padding-top: 7px; }
.foot { display: flex; justify-content: space-between; padding: 2px; align-items: center; height: 28px; }
.foot a { color: #0066cc; }
.foot button { width: 98px; height: 24px; background: #ccc; border: 1px solid #bfbfbf; color: #838383; }
.docscroll { position: absolute; right: 0; top: 0; bottom: 0; width: 21px; background: #efefef; display: flex; justify-content: center; }
.docscroll .thumb { width: 17px; height: 21px; margin-top: 437px; }

.viewbar { display: flex; align-items: center; height: 23px; background: #f0f0f0; border-left: 1px solid #666; }
.scale { padding-left: 28px; width: 103px; justify-content: flex-start; font-family: "Liberation Mono", monospace; font-size: 14px; white-space: nowrap; }
.vicons { display: flex; }
.vicons button { width: 28px; height: 22px; }
.vicons button:last-child { width: 18px; }
.hscroll { flex: 1; display: flex; align-items: center; height: 21px; }
.hscroll .thumb { width: 21px; height: 19px; margin: 0 auto; }
.hscroll svg { margin-left: 6px; }
.grip { margin: 0 4px 0 12px; }

.status { display: flex; align-items: stretch; height: 28px; border-top: 2px solid #8a8a8a; background: linear-gradient(#e4e4e4, #c4c4c4); }
.hint { width: 836px; white-space: nowrap; line-height: 30px; overflow: hidden; }
.sets, .picks { display: flex; gap: 2px; padding-top: 1px; }
.sets button, .picks button { width: 28px; background: #d9d9d9; }
.ws { width: 258px; }
.opt { width: 194px; color: #777; padding-left: 3px; }
.ws, .opt { background-color: #fff; border: 2px solid #ccc; }
.sets .count { width: 59px; gap: 6px; }
.picks { margin-left: auto; }
.picks .proc { width: 24px; }
.picks .filter { background: none; width: 36px; margin-right: 68px; }
```
FILE: building.js
```js
// Draws the office floor: interior walls, the two curtain-wall facades and the section box.
const svg = document.getElementById('model');
const NS = 'http://www.w3.org/2000/svg';
function add(tag, attrs, parent = svg) {
  const e = document.createElementNS(NS, tag);
  for (const k in attrs) e.setAttribute(k, attrs[k]);
  parent.appendChild(e);
  return e;
}
const poly = (pts, fill, parent, extra) => add('polygon', Object.assign({ points: pts.map(p => p.join()).join(' '), fill }, extra), parent);
const line = (x1, y1, x2, y2, stroke, w, parent, extra) => add('line', Object.assign({ x1, y1, x2, y2, stroke, 'stroke-width': w }, extra), parent);

const defs = add('defs', {});
function pattern(id, w, h, shapes) {
  const p = add('pattern', { id, width: w, height: h, patternUnits: 'userSpaceOnUse' }, defs);
  shapes.forEach(s => add('rect', { x: s[0], y: s[1], width: s[2], height: s[3], fill: s[4] }, p));
}
pattern('meshR', 6, 6, [[0, 0, 6, 6, '#000'], [0, 0, 1, 1, '#ddd'], [1, 1, 1, 1, '#ddd'], [3, 3, 1, 1, '#ddd'], [4, 4, 1, 1, '#bbb']]);
pattern('meshL', 12, 12, [[0, 0, 12, 12, '#000'], [8, 0, 1, 1, '#777'], [10, 0, 1, 1, '#666'], [7, 2, 1, 1, '#777'], [9, 2, 1, 1, '#666'], [5, 4, 1, 1, '#777'], [7, 4, 1, 1, '#666'], [4, 6, 1, 1, '#777'], [6, 6, 1, 1, '#666'], [2, 8, 1, 1, '#777'], [4, 8, 1, 1, '#666'], [1, 10, 1, 1, '#777'], [3, 10, 1, 1, '#666']]);
pattern('dotR', 13, 11, [[2, 2, 1, 2, '#0a2e48'], [8, 7, 2, 1, '#0a2e48']]);
pattern('dotL', 11, 13, [[3, 3, 1, 1, '#0b2231'], [8, 9, 1, 1, '#0b2231']]);
const clip = add('clipPath', { id: 'roof' }, defs);
add('polygon', { points: '383,423 799,312 1278,528 862,635' }, clip);

// back edges with their mullion caps and glazing glimpses
poly([[983, 394], [1003, 403], [1003, 407], [983, 398]], '#365f78', svg);
poly([[1183, 482], [1203, 491], [1203, 497], [1183, 487]], '#365f78', svg);
poly([[1230, 506], [1278, 526], [1278, 530], [1230, 510]], '#365f78', svg);
for (let x = 395; x < 800; x += 28) add('rect', { x, y: 418 - (x - 383) * 0.267, width: 4, height: 3, fill: '#000' });
for (let x = 830; x < 1270; x += 22) add('rect', { x, y: 310 + (x - 799) * 0.451, width: 3, height: 3, fill: '#000' });

const inside = add('g', { 'clip-path': 'url(#roof)' });
poly([[383, 423], [799, 312], [1278, 528], [862, 635]], '#7f7f7f', inside);

// walls: x1, y1, x2, y2 along the wall top, then width; rising walls face light, falling walls face dark
const walls = [
  [383, 423, 799, 312, 6], [470, 448, 660, 395, 5], [660, 392, 850, 341, 5], [537, 478, 700, 436, 5],
  [760, 402, 897, 366, 5], [603, 510, 767, 466, 5], [767, 442, 947, 393, 5], [667, 540, 837, 497, 5],
  [820, 459, 1000, 413, 5], [863, 476, 1050, 427, 5], [963, 477, 1095, 444, 4], [740, 573, 890, 532, 5],
  [890, 530, 1123, 470, 6], [925, 539, 1017, 516, 4], [890, 548, 953, 533, 4], [807, 605, 863, 588, 4],
  [925, 561, 962, 552, 3], [983, 567, 1003, 562, 3], [543, 405, 597, 392, 3], [613, 433, 648, 424, 3],
  [680, 463, 716, 454, 3], [748, 495, 784, 485, 3], [815, 525, 850, 515, 3], [632, 375, 688, 361, 3],
  [692, 403, 748, 388, 3], [747, 423, 798, 410, 3], [1112, 503, 1134, 498, 3], [1135, 514, 1197, 501, 3],
  [606, 417, 636, 410, 3], [672, 446, 703, 440, 3], [739, 477, 771, 470, 3], [804, 507, 836, 499, 3],
  [897, 475, 985, 451, 3], [905, 494, 940, 484, 3], [960, 503, 990, 495, 3], [870, 470, 920, 457, 3],
  [799, 312, 1278, 528, 7], [617, 366, 937, 517, 6], [573, 380, 900, 527, 6], [930, 521, 1057, 579, 5],
  [510, 391, 543, 405, 3], [557, 382, 590, 396, 3], [583, 420, 613, 433, 3], [648, 451, 680, 464, 3],
  [717, 482, 748, 495, 3], [783, 512, 815, 525, 3], [797, 558, 843, 577, 3], [638, 411, 660, 421, 3],
  [703, 441, 725, 451, 3], [771, 470, 793, 480, 3], [667, 352, 688, 361, 3], [748, 388, 798, 410, 3],
  [703, 403, 747, 423, 3], [835, 425, 880, 443, 3], [820, 428, 870, 449, 4], [950, 395, 1000, 417, 4],
  [988, 443, 1065, 483, 4], [933, 460, 995, 488, 4], [880, 473, 912, 489, 3], [958, 481, 995, 499, 4],
  [1065, 485, 1112, 505, 3], [995, 503, 1127, 563, 4], [1133, 500, 1197, 541, 3], [1197, 502, 1256, 529, 4],
  [1045, 430, 1093, 450, 4], [887, 548, 1007, 599, 4], [962, 552, 983, 567, 3], [862, 588, 935, 617, 4],
  [820, 567, 843, 577, 4]
];
const bits = [];
walls.forEach(([x1, y1, x2, y2]) => {
  const n = Math.max(1, Math.ceil((x2 - x1) / 6));
  const fill = y2 < y1 ? '#7f7f7f' : '#2d2d2d';
  for (let i = 0; i < n; i++) {
    const a = i / n, b = (i + 1) / n;
    const p = [x1 + (x2 - x1) * a, y1 + (y2 - y1) * a], q = [x1 + (x2 - x1) * b, y1 + (y2 - y1) * b];
    bits.push({ y: (p[1] + q[1]) / 2, p, q, fill, l: i === 0, r: i === n - 1 });
  }
});
bits.sort((a, b) => a.y - b.y).forEach(({ p, q, fill, l, r }) => {
  poly([p, [q[0] + 1, q[1]], [q[0] + 1, q[1] + 85], [p[0], p[1] + 85]], fill, inside);
  if (l) line(p[0], p[1], p[0], p[1] + 85, '#000', 1, inside);
  if (r) line(q[0], q[1], q[0], q[1] + 85, '#000', 1, inside);
});

// columns and window glimpses: x, y, width, height, colour
[[485, 396, 8, 44, '#bdbdbd'], [493, 397, 16, 41, '#46a2d0'], [507, 396, 2, 42, '#075787'], [521, 391, 15, 9, '#46a2d0'],
 [645, 358, 7, 13, '#075787'], [652, 356, 9, 14, '#46a2d0'], [679, 348, 17, 32, '#46a2d0'], [696, 342, 4, 38, '#444'], [700, 339, 8, 38, '#bdbdbd'],
 [781, 320, 4, 36, '#999'], [786, 318, 6, 36, '#2d2d2d'], [811, 333, 17, 13, '#41687e'],
 [530, 432, 8, 46, '#bdbdbd'], [555, 426, 3, 44, '#777'], [767, 361, 7, 36, '#bdbdbd'], [786, 356, 3, 36, '#777'],
 [690, 486, 8, 46, '#bdbdbd'], [698, 485, 3, 46, '#ddd'], [665, 493, 3, 44, '#777'], [825, 548, 8, 24, '#bdbdbd'],
 [896, 407, 8, 28, '#bdbdbd'], [878, 411, 6, 30, '#777'], [909, 436, 9, 27, '#bdbdbd'], [996, 415, 5, 24, '#444'], [1001, 415, 17, 23, '#bdbdbd'], [1018, 424, 10, 10, '#365f78'],
 [1070, 450, 5, 24, '#444'], [1075, 451, 19, 25, '#bdbdbd'], [1095, 462, 6, 11, '#0c5a88'], [1011, 470, 4, 26, '#bdbdbd'],
 [937, 518, 6, 15, '#bdbdbd'], [898, 369, 14, 30, '#2d2d2d'], [868, 358, 17, 13, '#365f78'], [926, 385, 15, 12, '#365f78'], [840, 342, 11, 36, '#2d2d2d'],
 [951, 400, 10, 18, '#2d2d2d'], [1140, 482, 12, 12, '#1d5878'], [1130, 476, 9, 22, '#000'], [900, 554, 3, 44, '#777'], [957, 582, 6, 22, '#666'], [1084, 546, 6, 24, '#666'], [1155, 528, 6, 22, '#777']
].forEach(([x, y, width, height, fill]) => add('rect', { x, y, width, height, fill, stroke: '#000', 'stroke-width': 1 }, inside));
[[860, 455, 870, 452], [885, 453, 885, 467], [898, 450, 898, 464], [853, 453, 853, 468], [1000, 470, 1000, 490], [1024, 470, 1024, 484], [1033, 465, 1033, 482], [538, 442, 555, 438], [773, 373, 786, 369], [670, 502, 690, 497],
 [548, 384, 548, 396], [632, 363, 632, 374], [1160, 510, 1160, 530], [1165, 508, 1165, 528], [845, 590, 845, 610], [855, 586, 855, 612], [965, 440, 965, 460], [1035, 445, 1035, 456], [953, 455, 953, 470]
].forEach(l => line(l[0], l[1], l[2], l[3], '#000', 1, inside));

// doors: light ones on light walls, brown ones on dark walls
[[546, 412, 18, 16], [616, 441, 18, 16], [682, 471, 18, 16], [751, 500, 18, 17], [818, 532, 16, 16], [668, 375, 18, 12], [730, 402, 17, 8], [778, 426, 17, 12], [995, 532, 20, 32], [1114, 512, 17, 52], [983, 570, 19, 28], [834, 593, 10, 4], [978, 559, 8, 2]
].forEach(([x, y, w, h]) => {
  poly([[x, y], [x + w, y - w * 0.267], [x + w, y - w * 0.267 + h], [x, y + h]], '#d39b5a', inside, { stroke: '#000', 'stroke-width': 2 });
  line(x, y + 1, x + w, y + 1 - w * 0.267, '#8a4a2c', 1, inside);
});
[[628, 386, 12, 14], [599, 401, 14, 10], [667, 406, 15, 18], [668, 431, 13, 10], [736, 437, 14, 16], [734, 461, 13, 10], [803, 493, 12, 8], [868, 522, 15, 12], [1137, 525, 16, 20], [868, 598, 16, 32], [820, 592, 10, 8]
].forEach(([x, y, w, h]) => poly([[x, y], [x + w, y + w * 0.44], [x + w, y + w * 0.44 + h], [x, y + h]], '#4d3a20', inside, { stroke: '#000', 'stroke-width': 2 }));

// wall tops sit above every face
walls.forEach(([x1, y1, x2, y2, w]) => line(x1, y1, x2, y2, '#000', w + 1, inside, { 'shape-rendering': 'auto' }));
walls.forEach(([x1, y1, x2, y2, w]) => line(x1, y1, x2, y2, '#858585', w - 1.5, inside, { 'shape-rendering': 'auto' }));
[[573, 381, 900, 528], [617, 367, 937, 518], [800, 315, 1278, 531], [390, 424, 799, 315]].forEach(l => line(l[0], l[1], l[2], l[3], '#000', 1, inside));
// stairs and lift pieces
[[916, 417, 935, 428], [921, 422, 945, 417], [913, 430, 922, 424], [1016, 465, 1056, 482], [1020, 463, 1062, 481], [580, 378, 594, 375], [960, 500, 975, 496], [1045, 482, 1070, 474], [830, 500, 850, 515], [858, 502, 872, 512]].forEach(l => line(l[0], l[1], l[2], l[3], '#000', 2, inside));
[[580, 382, 592, 379], [632, 377, 628, 375], [990, 410, 1014, 413], [1077, 452, 1090, 446], [856, 468, 862, 466], [915, 434, 920, 435], [768, 430, 778, 428], [889, 556, 895, 553]].forEach(l => line(l[0], l[1], l[2], l[3], '#ddd', 3, inside));
[[846, 335, 868, 344], [902, 360, 926, 371], [960, 387, 982, 397], [1117, 457, 1143, 469], [1207, 498, 1232, 509]].forEach(l => line(l[0], l[1], l[2], l[3], '#0b0b0b', 6, svg, { 'shape-rendering': 'auto' }));

// left facade
const L = (x, z) => [x, 423 + (x - 383) * 0.4436 + z];
const left = (a, b, z1, z2, f) => poly([L(a, z1), L(b, z1), L(b, z2), L(a, z2)], f, svg);
left(382, 862, 0, 145, '#254557');
const glass = [[383, 434], [460, 501], [526, 568], [593, 634], [660, 701], [727, 796], [822, 862]];
glass.forEach(([a, b], i) => {
  const w = b - a;
  left(a, a + w * 0.12, 0, 145, '#0d3046');
  left(a + w * 0.38, a + w * 0.5, 8, 55, '#35586b');
  left(a + w * 0.2, b, 48, 60, '#0d3046');
  left(a + w * 0.15, b, 70, 78, '#0d3046');
  if (i < 4) poly([L(b, 100), L(b, 145), L(a, 145), L(a + w * 0.4, 118)], '#4a6b7f', svg);
  else { left(a + w * 0.2, b, 87, 136, '#0d3046'); left(a, b, 138, 145, '#4a6b7f'); }
  [0.25, 0.38, 0.5].forEach(t => { const x = a + w * t; line(x, L(x, 5)[1], x, L(x, 130)[1], '#0a2636', 1, svg); });
  left(a, b, 0, 145, 'url(#dotL)');
});
[[11, 3], [64, 3], [85, 3]].forEach(([z, t]) => left(383, 862, z, z + t, '#000'));
left(822, 862, 67, 70, '#444'); left(822, 862, 76, 80, '#444');
[[434, 460], [501, 526], [568, 593], [634, 659], [701, 727], [797, 820]].forEach(([a, b]) => { left(a, b, 4, 145, '#000'); left(a, b - 3, 4, 143, 'url(#meshL)'); });
left(382, 385, 0, 145, '#000'); left(386, 388, 4, 145, '#07578a'); left(420, 422, 5, 145, '#000');
[501, 568, 634, 702, 797].forEach(x => { left(x - 1, x, 3, 146, '#000'); left(x, x + 1, 3, 146, '#8a8a8a'); });
[487, 553, 620, 688, 738, 768, 783, 822, 836].forEach(x => { left(x - 2, x + 2, 3, 147, '#000'); left(x - 1, x + 1, 3, 146, '#8a8a8a'); });
left(383, 862, -3, 5, '#000'); left(383, 862, -2, 4, '#858585'); left(410, 715, -2, 1, '#d5d5d5'); line(383, 424, 862, 636, '#222', 1, svg);
[[444, 460], [511, 527], [577, 594], [644, 660], [711, 729], [805, 826]].forEach(([a, b]) => left(a, b, 1, 7, '#333'));
line(383, 568, 862, 781, '#000', 1, svg);

// right facade
const R = (x, z) => [x, 635 - (x - 862) * 0.2596 + z];
const right = (a, b, z1, z2, f) => poly([R(a, z1), R(b, z1), R(b, z2), R(a, z2)], f, svg);
right(862, 1278, 0, 145, '#227eae');
[[862, 906, 3, 22], [938, 960, 3, 25], [961, 983, 3, 50], [1015, 1052, 3, 40], [1085, 1105, 3, 42], [1107, 1126, 3, 62], [1160, 1200, 3, 45], [1190, 1200, 3, 62], [1235, 1276, 5, 62], [903, 908, 3, 62],
 [862, 867, 85, 145], [902, 906, 85, 140], [963, 980, 83, 130], [995, 1012, 83, 142], [1015, 1020, 83, 100], [1041, 1052, 83, 140], [1085, 1106, 83, 118], [1107, 1126, 83, 140], [1181, 1201, 83, 140], [1262, 1276, 83, 138]
].forEach(([a, b, z1, z2]) => right(a, b, z1, z2, '#0c6898'));
[[941, 958, 86, 143], [962, 973, 120, 143], [1015, 1041, 92, 143], [1130, 1142, 4, 60], [1142, 1152, 86, 140]].forEach(([a, b, z1, z2]) => right(a, b, z1, z2, z2 < 70 ? '#3a93c2' : '#48a3d2'));
poly([R(1086, 112), R(1115, 132), R(1115, 144), R(1086, 144)], '#48a3d2', svg);
poly([R(938, 30), R(982, 50), R(982, 60), R(938, 60)], '#2d8fc2', svg);
poly([R(1086, 40), R(1122, 56), R(1122, 61), R(1086, 61)], '#2d8fc2', svg);
poly([R(1236, 40), R(1262, 50), R(1276, 56), R(1236, 60)], '#2d8fc2', svg);
for (let x = 872; x < 1276; x += 17) line(x, R(x, 8)[1], x, R(x, 140)[1], '#075f90', 1, svg);
right(862, 1278, 4, 144, 'url(#dotR)');
right(862, 1278, 12, 15, '#000');
[[908, 937], [1055, 1085], [1203, 1233]].forEach(([a, b]) => right(a, b, 0, 145, 'url(#meshR)'));
right(864, 1278, 71, 73, '#000');
[[62, 7], [76, 5]].forEach(([z, t]) => { right(864, 1278, z - 1, z + t + 1, '#000'); right(864, 1278, z, z + t, '#7f7f7f'); });
right(864, 1278, 65, 66, '#111');
[[906, 3], [938, 2], [959, 2], [982, 2], [1013, 2], [1052, 3], [1105, 2], [1126, 3], [1157, 4], [1179, 2], [1202, 3], [1234, 2], [1277, 2], [862, 2]].forEach(([x, w]) => { right(x - 1, x + w + 1, 0, 147, '#000'); right(x, x + w - 1, 0, 146, '#858585'); });
[[959, 3], [982, 3], [1013, 3], [1126, 3]].forEach(([x, w]) => right(x, x + w, 85, 146, '#111'));
right(862, 1278, -5, 3, '#000'); right(862, 1278, -4, 0, '#8a8a8a'); right(862, 1278, 1, 2, '#707070');
[[970, 978], [1046, 1054], [1070, 1079], [1140, 1146]].forEach(([a, b]) => right(a, b, -4, 0, '#e5e5e5'));
line(862, 780, 1278, 673, '#000', 1, svg);

// section box
[[849, 230, 230, 396], [849, 230, 1620, 575], [849, 230, 849, 376], [849, 376, 230, 541], [849, 376, 1620, 721], [230, 441, 988, 781], [988, 781, 1620, 615], [988, 781, 988, 926], [988, 926, 230, 587], [988, 926, 1620, 757]].forEach(l => line(l[0], l[1], l[2], l[3], '#000', 1, svg));
```
